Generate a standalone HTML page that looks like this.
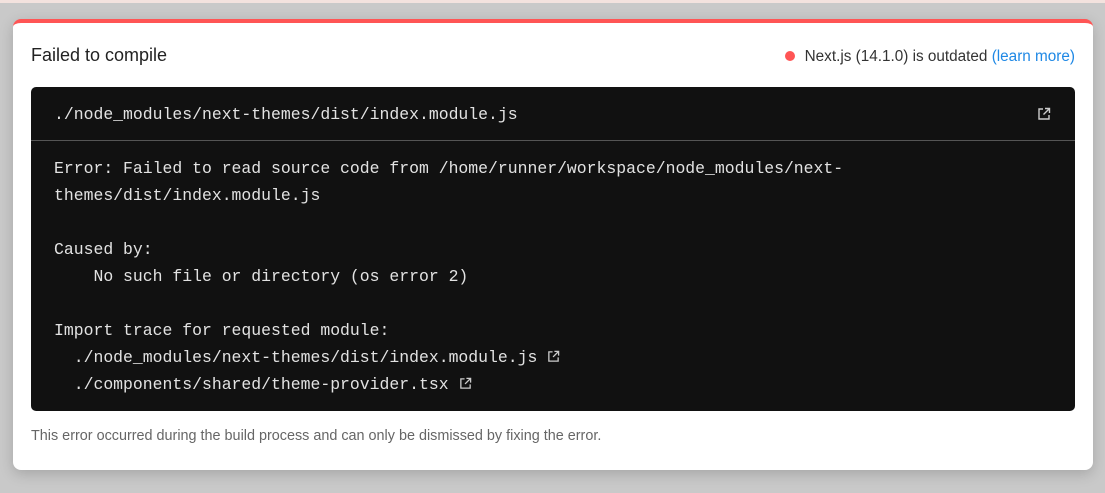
<!DOCTYPE html>
<html><head><meta charset="utf-8"><style>
html,body{margin:0;padding:0}
body{width:1105px;height:493px;background:#c9c9c9;position:relative;overflow:hidden;font-family:"Liberation Sans",sans-serif}
.topband{position:absolute;left:0;top:0;width:1105px;height:3px;background:#f3e2de}
.card{position:absolute;left:13px;top:19px;width:1080px;height:451px;background:#fff;border-radius:8px;border-top:4px solid #ff5555;box-sizing:border-box;box-shadow:0 4px 14px rgba(0,0,0,.18)}
.title{position:absolute;left:18px;top:22px;font-size:18px;color:#222;font-weight:500}
.ver{position:absolute;right:18px;top:25px;font-size:15.3px;color:#333}
.dot{display:inline-block;width:10px;height:10px;border-radius:50%;background:#ff5555;margin-right:10px;vertical-align:0px}
.ver a{color:#1e88e5;text-decoration:none}
.code{position:absolute;left:18px;top:64px;width:1044px;height:324px;background:#111;border-radius:5px;font-family:"Liberation Mono",monospace;font-size:16.45px;color:#e2e2e2}
.hdr{height:54px;border-bottom:1px solid #555;box-sizing:border-box;padding:0 23px;line-height:55px;position:relative}
.body{padding:14px 23px;line-height:27px;white-space:pre}
.ic{display:inline-block;vertical-align:-1px;margin-left:10px}
.foot{position:absolute;left:18px;top:405px;font-size:14.4px;color:#666}
</style></head><body>
<div class="topband"></div>
<div class="card">
<div class="title">Failed to compile</div>
<div class="ver"><span class="dot"></span>Next.js (14.1.0) is outdated <a>(learn more)</a></div>
<div class="code">
<div class="hdr">./node_modules/next-themes/dist/index.module.js<svg style="position:absolute;right:24px;top:20px" width="14" height="14" viewBox="0 0 14 14" fill="none" stroke="#ccc" stroke-width="1.4"><path d="M6 2H2v10h10V8"/><path d="M8 1.5h4.5V6M12.5 1.5L6.5 7.5"/></svg></div>
<div class="body">Error: Failed to read source code from /home/runner/workspace/node_modules/next-
themes/dist/index.module.js

Caused by:
    No such file or directory (os error 2)

Import trace for requested module:
  ./node_modules/next-themes/dist/index.module.js<svg class="ic" width="13" height="13" viewBox="0 0 14 14" fill="none" stroke="#ccc" stroke-width="1.4"><path d="M6 2H2v10h10V8"/><path d="M8 1.5h4.5V6M12.5 1.5L6.5 7.5"/></svg>
  ./components/shared/theme-provider.tsx<svg class="ic" width="13" height="13" viewBox="0 0 14 14" fill="none" stroke="#ccc" stroke-width="1.4"><path d="M6 2H2v10h10V8"/><path d="M8 1.5h4.5V6M12.5 1.5L6.5 7.5"/></svg></div>
</div>
<div class="foot">This error occurred during the build process and can only be dismissed by fixing the error.</div>
</div>
</body></html>
